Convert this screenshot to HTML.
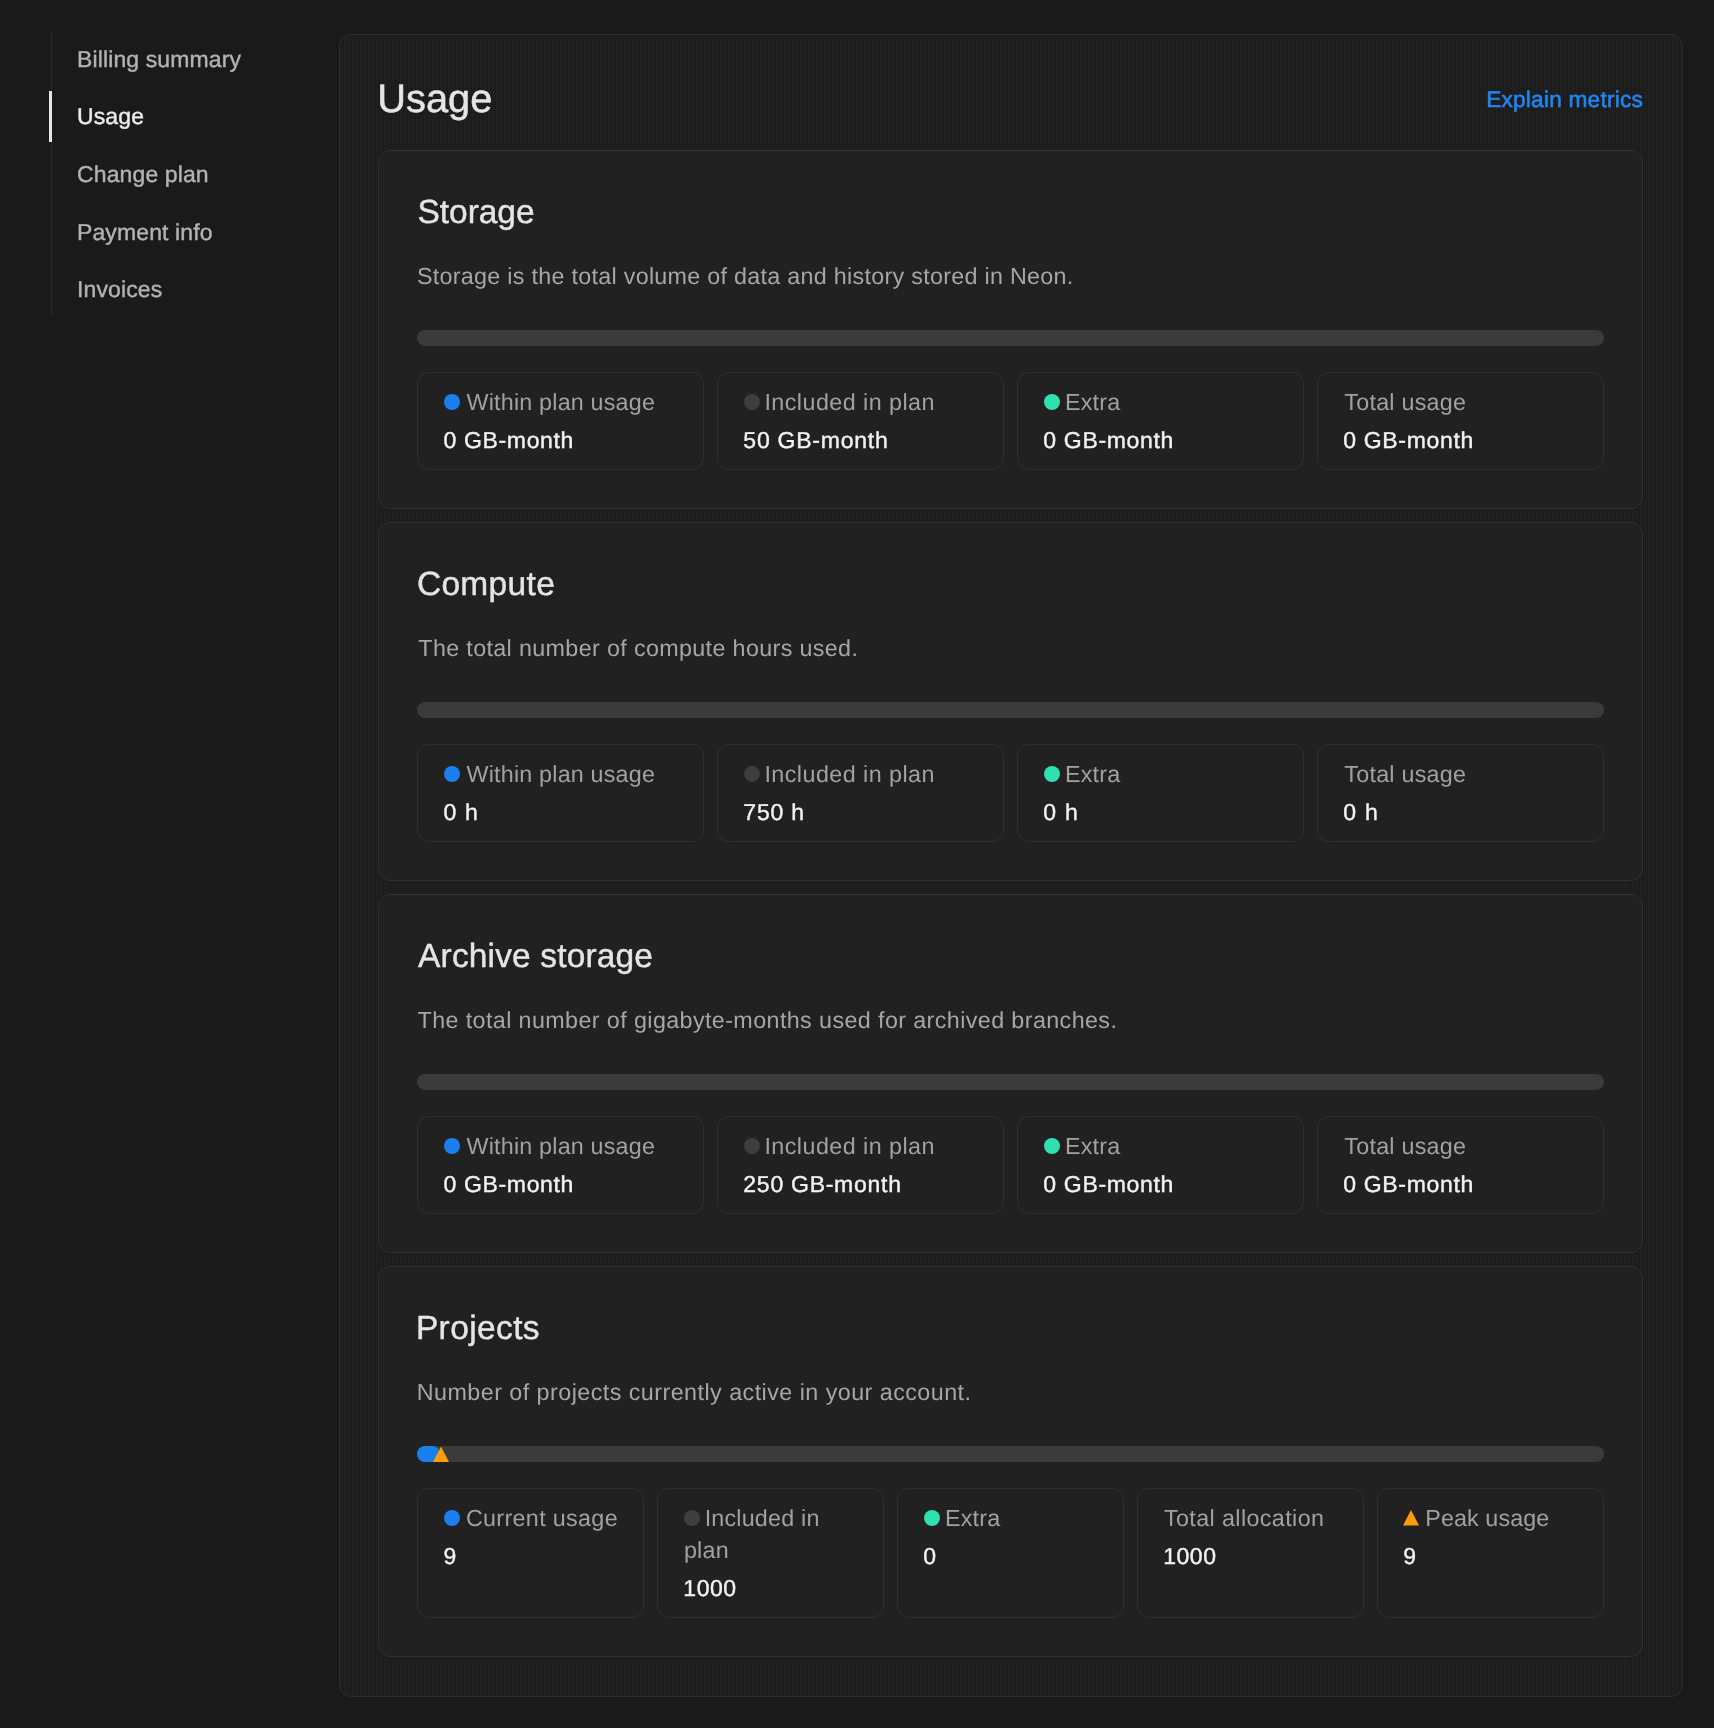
<!DOCTYPE html>
<html><head><meta charset="utf-8"><title>Usage</title>
<style>
html,body{margin:0;padding:0;}
body{width:1714px;height:1728px;background:#1a1a1a;position:relative;overflow:hidden;font-family:"Liberation Sans",sans-serif;}
#root{position:absolute;left:0;top:0;width:1714px;height:1728px;will-change:transform;text-rendering:geometricPrecision;}
.t{position:absolute;line-height:1;white-space:nowrap;}
.box{position:absolute;box-sizing:border-box;}
.panel{background-color:#1a1a1a;background-image:conic-gradient(at 1px 1px,transparent 270deg,#262626 0),conic-gradient(at 1px 1px,transparent 270deg,#232323 0);background-size:2px 2px,4px 4px;background-position:0 0,1px 1px;border:1px solid #2c2c2c;border-radius:12px;}
.card{background:#212121;border:1px solid #2f2f2f;border-radius:12px;}
.stat{border:1px solid #2f2f2f;border-radius:12px;}
.bar{background:#3b3b3b;border-radius:8px;}
.dot{position:absolute;width:16px;height:16px;border-radius:50%;}
</style></head><body><div id="root">
<div class="box" style="left:51px;top:33px;width:1px;height:282px;background:#2a2a2a"></div>
<div class="box" style="left:49px;top:91px;width:3px;height:51px;background:#e6e6e6"></div>
<div class="t" style="left:77.00px;top:48.00px;font-size:23.0px;letter-spacing:0.12px;color:#b3b3b3;-webkit-text-stroke:0.4px #b3b3b3;">Billing summary</div>
<div class="t" style="left:77.00px;top:105.00px;font-size:23.0px;letter-spacing:0.12px;color:#ececec;-webkit-text-stroke:0.4px #ececec;">Usage</div>
<div class="t" style="left:77.00px;top:163.00px;font-size:23.0px;letter-spacing:0.12px;color:#b3b3b3;-webkit-text-stroke:0.4px #b3b3b3;">Change plan</div>
<div class="t" style="left:77.00px;top:221.00px;font-size:23.0px;letter-spacing:0.12px;color:#b3b3b3;-webkit-text-stroke:0.4px #b3b3b3;">Payment info</div>
<div class="t" style="left:77.00px;top:278.00px;font-size:23.0px;letter-spacing:0.12px;color:#b3b3b3;-webkit-text-stroke:0.4px #b3b3b3;">Invoices</div>
<div class="box panel" style="left:339px;top:34px;width:1344px;height:1663px"></div>
<div class="t" style="left:377.30px;top:80.00px;font-size:39.8px;letter-spacing:0.0px;color:#e5e5e5;-webkit-text-stroke:0.5px #e5e5e5;">Usage</div>
<div class="t" style="right:71.00px;top:88.00px;font-size:22.7px;letter-spacing:0.2px;color:#1e87f4;-webkit-text-stroke:0.55px #1e87f4;">Explain metrics</div>
<div class="box card" style="left:378px;top:150px;width:1265px;height:359px"></div>
<div class="t" style="left:417.50px;top:196.00px;font-size:33.5px;letter-spacing:-0.04px;color:#e5e5e5;-webkit-text-stroke:0.4px #e5e5e5;">Storage</div>
<div class="t" style="left:416.90px;top:265.00px;font-size:23.3px;letter-spacing:0.29px;color:#a6a6a6;">Storage is the total volume of data and history stored in Neon.</div>
<div class="box bar" style="left:417px;top:330px;width:1187px;height:16px"></div>
<div class="box stat" style="left:417.00px;top:372px;width:287.15px;height:98px"></div>
<div class="dot" style="left:444.00px;top:394.00px;background:#1b80ee"></div>
<div class="t" style="left:466.50px;top:391.00px;font-size:23.3px;letter-spacing:0.2px;color:#a1a1a1;">Within plan usage</div>
<div class="t" style="left:443.40px;top:429.00px;font-size:23.0px;letter-spacing:0.67px;color:#f2f2f2;-webkit-text-stroke:0.4px #f2f2f2;">0 GB-month</div>
<div class="box stat" style="left:716.95px;top:372px;width:287.15px;height:98px"></div>
<div class="dot" style="left:743.95px;top:394.00px;background:#3e3e3e"></div>
<div class="t" style="left:764.45px;top:391.00px;font-size:23.3px;letter-spacing:0.45px;color:#a1a1a1;">Included in plan</div>
<div class="t" style="left:743.35px;top:429.00px;font-size:23.0px;letter-spacing:0.76px;color:#f2f2f2;-webkit-text-stroke:0.4px #f2f2f2;">50 GB-month</div>
<div class="box stat" style="left:1016.90px;top:372px;width:287.15px;height:98px"></div>
<div class="dot" style="left:1043.90px;top:394.00px;background:#2fe0b0"></div>
<div class="t" style="left:1065.00px;top:391.00px;font-size:23.3px;letter-spacing:0.2px;color:#a1a1a1;">Extra</div>
<div class="t" style="left:1043.30px;top:429.00px;font-size:23.0px;letter-spacing:0.67px;color:#f2f2f2;-webkit-text-stroke:0.4px #f2f2f2;">0 GB-month</div>
<div class="box stat" style="left:1316.85px;top:372px;width:287.15px;height:98px"></div>
<div class="t" style="left:1344.35px;top:391.00px;font-size:23.3px;letter-spacing:0.24px;color:#a1a1a1;">Total usage</div>
<div class="t" style="left:1343.25px;top:429.00px;font-size:23.0px;letter-spacing:0.67px;color:#f2f2f2;-webkit-text-stroke:0.4px #f2f2f2;">0 GB-month</div>
<div class="box card" style="left:378px;top:522px;width:1265px;height:359px"></div>
<div class="t" style="left:416.90px;top:568.00px;font-size:33.5px;letter-spacing:0.33px;color:#e5e5e5;-webkit-text-stroke:0.4px #e5e5e5;">Compute</div>
<div class="t" style="left:418.30px;top:637.00px;font-size:23.3px;letter-spacing:0.356px;color:#a6a6a6;">The total number of compute hours used.</div>
<div class="box bar" style="left:417px;top:702px;width:1187px;height:16px"></div>
<div class="box stat" style="left:417.00px;top:744px;width:287.15px;height:98px"></div>
<div class="dot" style="left:444.00px;top:766.00px;background:#1b80ee"></div>
<div class="t" style="left:466.50px;top:763.00px;font-size:23.3px;letter-spacing:0.2px;color:#a1a1a1;">Within plan usage</div>
<div class="t" style="left:443.40px;top:801.00px;font-size:23.0px;letter-spacing:1.25px;color:#f2f2f2;-webkit-text-stroke:0.4px #f2f2f2;">0 h</div>
<div class="box stat" style="left:716.95px;top:744px;width:287.15px;height:98px"></div>
<div class="dot" style="left:743.95px;top:766.00px;background:#3e3e3e"></div>
<div class="t" style="left:764.45px;top:763.00px;font-size:23.3px;letter-spacing:0.45px;color:#a1a1a1;">Included in plan</div>
<div class="t" style="left:743.35px;top:801.00px;font-size:23.0px;letter-spacing:0.8px;color:#f2f2f2;-webkit-text-stroke:0.4px #f2f2f2;">750 h</div>
<div class="box stat" style="left:1016.90px;top:744px;width:287.15px;height:98px"></div>
<div class="dot" style="left:1043.90px;top:766.00px;background:#2fe0b0"></div>
<div class="t" style="left:1065.00px;top:763.00px;font-size:23.3px;letter-spacing:0.2px;color:#a1a1a1;">Extra</div>
<div class="t" style="left:1043.30px;top:801.00px;font-size:23.0px;letter-spacing:1.25px;color:#f2f2f2;-webkit-text-stroke:0.4px #f2f2f2;">0 h</div>
<div class="box stat" style="left:1316.85px;top:744px;width:287.15px;height:98px"></div>
<div class="t" style="left:1344.35px;top:763.00px;font-size:23.3px;letter-spacing:0.24px;color:#a1a1a1;">Total usage</div>
<div class="t" style="left:1343.25px;top:801.00px;font-size:23.0px;letter-spacing:1.25px;color:#f2f2f2;-webkit-text-stroke:0.4px #f2f2f2;">0 h</div>
<div class="box card" style="left:378px;top:894px;width:1265px;height:359px"></div>
<div class="t" style="left:418.10px;top:940.00px;font-size:33.5px;letter-spacing:0.15px;color:#e5e5e5;-webkit-text-stroke:0.4px #e5e5e5;">Archive storage</div>
<div class="t" style="left:417.50px;top:1009.00px;font-size:23.3px;letter-spacing:0.398px;color:#a6a6a6;">The total number of gigabyte-months used for archived branches.</div>
<div class="box bar" style="left:417px;top:1074px;width:1187px;height:16px"></div>
<div class="box stat" style="left:417.00px;top:1116px;width:287.15px;height:98px"></div>
<div class="dot" style="left:444.00px;top:1138.00px;background:#1b80ee"></div>
<div class="t" style="left:466.50px;top:1135.00px;font-size:23.3px;letter-spacing:0.2px;color:#a1a1a1;">Within plan usage</div>
<div class="t" style="left:443.40px;top:1173.00px;font-size:23.0px;letter-spacing:0.67px;color:#f2f2f2;-webkit-text-stroke:0.4px #f2f2f2;">0 GB-month</div>
<div class="box stat" style="left:716.95px;top:1116px;width:287.15px;height:98px"></div>
<div class="dot" style="left:743.95px;top:1138.00px;background:#3e3e3e"></div>
<div class="t" style="left:764.45px;top:1135.00px;font-size:23.3px;letter-spacing:0.45px;color:#a1a1a1;">Included in plan</div>
<div class="t" style="left:743.35px;top:1173.00px;font-size:23.0px;letter-spacing:0.73px;color:#f2f2f2;-webkit-text-stroke:0.4px #f2f2f2;">250 GB-month</div>
<div class="box stat" style="left:1016.90px;top:1116px;width:287.15px;height:98px"></div>
<div class="dot" style="left:1043.90px;top:1138.00px;background:#2fe0b0"></div>
<div class="t" style="left:1065.00px;top:1135.00px;font-size:23.3px;letter-spacing:0.2px;color:#a1a1a1;">Extra</div>
<div class="t" style="left:1043.30px;top:1173.00px;font-size:23.0px;letter-spacing:0.67px;color:#f2f2f2;-webkit-text-stroke:0.4px #f2f2f2;">0 GB-month</div>
<div class="box stat" style="left:1316.85px;top:1116px;width:287.15px;height:98px"></div>
<div class="t" style="left:1344.35px;top:1135.00px;font-size:23.3px;letter-spacing:0.24px;color:#a1a1a1;">Total usage</div>
<div class="t" style="left:1343.25px;top:1173.00px;font-size:23.0px;letter-spacing:0.67px;color:#f2f2f2;-webkit-text-stroke:0.4px #f2f2f2;">0 GB-month</div>
<div class="box card" style="left:378px;top:1266px;width:1265px;height:391px"></div>
<div class="t" style="left:415.90px;top:1312.00px;font-size:33.5px;letter-spacing:0.38px;color:#e5e5e5;-webkit-text-stroke:0.4px #e5e5e5;">Projects</div>
<div class="t" style="left:416.80px;top:1381.00px;font-size:23.3px;letter-spacing:0.457px;color:#a6a6a6;">Number of projects currently active in your account.</div>
<div class="box bar" style="left:417px;top:1446px;width:1187px;height:16px"></div>
<div class="box stat" style="left:417.00px;top:1488px;width:227.16px;height:130px"></div>
<div class="dot" style="left:444.00px;top:1510.00px;background:#1b80ee"></div>
<div class="t" style="left:465.90px;top:1507.00px;font-size:23.3px;letter-spacing:0.34px;color:#a1a1a1;">Current usage</div>
<div class="t" style="left:443.40px;top:1545.00px;font-size:23.0px;letter-spacing:0.3px;color:#f2f2f2;-webkit-text-stroke:0.4px #f2f2f2;">9</div>
<div class="box stat" style="left:656.96px;top:1488px;width:227.16px;height:130px"></div>
<div class="dot" style="left:683.96px;top:1510.00px;background:#3e3e3e"></div>
<div class="t" style="left:704.66px;top:1507.00px;font-size:23.3px;letter-spacing:0.2px;color:#a1a1a1;">Included in</div>
<div class="t" style="left:683.96px;top:1539.00px;font-size:23.3px;letter-spacing:0.2px;color:#a1a1a1;">plan</div>
<div class="t" style="left:683.36px;top:1577.00px;font-size:23.0px;letter-spacing:0.5px;color:#f2f2f2;-webkit-text-stroke:0.4px #f2f2f2;">1000</div>
<div class="box stat" style="left:896.92px;top:1488px;width:227.16px;height:130px"></div>
<div class="dot" style="left:923.92px;top:1510.00px;background:#2fe0b0"></div>
<div class="t" style="left:945.02px;top:1507.00px;font-size:23.3px;letter-spacing:0.2px;color:#a1a1a1;">Extra</div>
<div class="t" style="left:923.32px;top:1545.00px;font-size:23.0px;letter-spacing:0.3px;color:#f2f2f2;-webkit-text-stroke:0.4px #f2f2f2;">0</div>
<div class="box stat" style="left:1136.88px;top:1488px;width:227.16px;height:130px"></div>
<div class="t" style="left:1163.88px;top:1507.00px;font-size:23.3px;letter-spacing:0.4px;color:#a1a1a1;">Total allocation</div>
<div class="t" style="left:1163.28px;top:1545.00px;font-size:23.0px;letter-spacing:0.5px;color:#f2f2f2;-webkit-text-stroke:0.4px #f2f2f2;">1000</div>
<div class="box stat" style="left:1376.84px;top:1488px;width:227.16px;height:130px"></div>
<svg style="position:absolute;left:1402.84px;top:1509.70px" width="16" height="16" viewBox="0 0 16 16"><path d="M8 0 L16 15.5 L0 15.5 Z" fill="#fe9c0b"/></svg>
<div class="t" style="left:1425.34px;top:1507.00px;font-size:23.3px;letter-spacing:0.09px;color:#a1a1a1;">Peak usage</div>
<div class="t" style="left:1403.24px;top:1545.00px;font-size:23.0px;letter-spacing:0.3px;color:#f2f2f2;-webkit-text-stroke:0.4px #f2f2f2;">9</div>
<div class="box" style="left:417px;top:1446px;width:23px;height:16px;border-radius:8px;background:#1b80ee"></div>
<svg style="position:absolute;left:433px;top:1446px" width="16" height="16" viewBox="0 0 16 16"><path d="M8 0.5 L16 16 L0 16 Z" fill="#fe9c0b"/></svg>
</div></body></html>
